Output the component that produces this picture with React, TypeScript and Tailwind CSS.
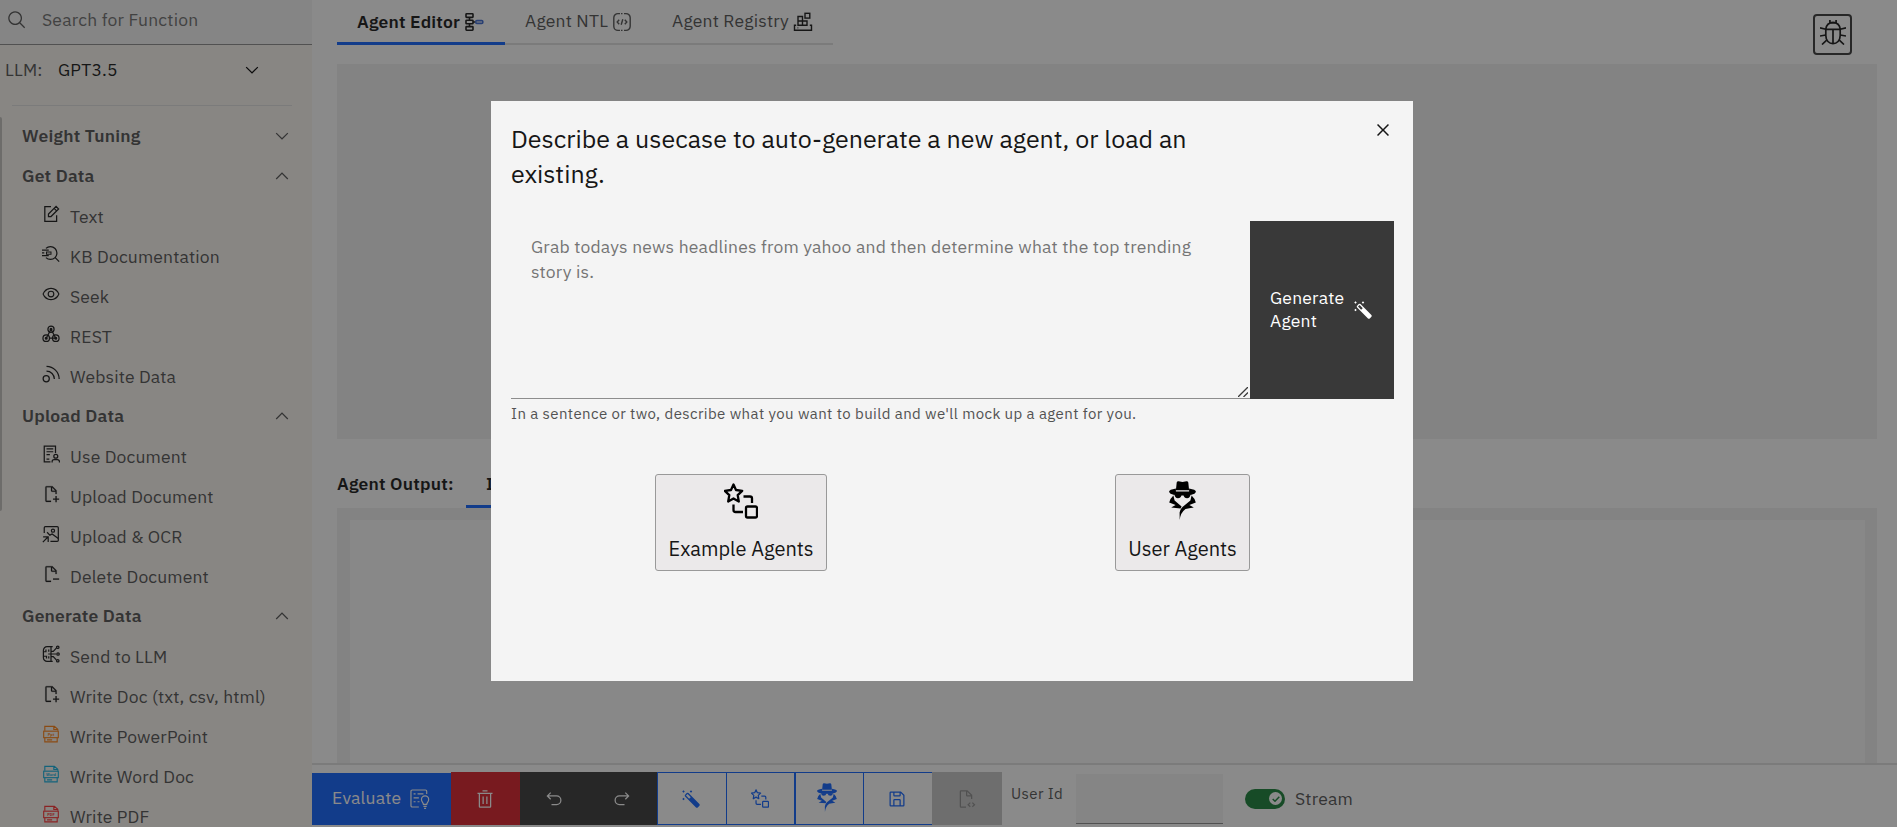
import React from "react";

type IconProps = { className?: string };

const Svg = ({ className = "size-5", children }: { className?: string; children: React.ReactNode }) => (
  <svg viewBox="0 0 32 32" className={`shrink-0 ${className}`} fill="currentColor">
    {children}
  </svg>
);

const Line = ({ className = "size-[18px]", children }: { className?: string; children: React.ReactNode }) => (
  <svg viewBox="0 0 32 32" className={`shrink-0 ${className}`} fill="none" stroke="currentColor" strokeWidth="2.200">
    {children}
  </svg>
);

const SearchIcon = ({ className }: IconProps) => (
  <Svg className={className}>
    <path d="M29 27.5859l-7.5521-7.5521a11.0177 11.0177 0 10-1.4141 1.4141L27.5859 29zM4 13a9 9 0 119 9A9.01 9.01 0 014 13z" />
  </Svg>
);

const ChevronDown = () => (
  <svg viewBox="0 0 16 16" className="size-5 shrink-0" fill="currentColor">
    <path d="M8 11 3 6 3.7 5.3 8 9.6 12.3 5.3 13 6z" />
  </svg>
);

const ChevronUp = () => (
  <svg viewBox="0 0 16 16" className="size-5 shrink-0" fill="currentColor">
    <path d="M8 5 13 10 12.3 10.7 8 6.4 3.7 10.7 3 10z" />
  </svg>
);

const CloseIcon = () => (
  <Svg className="size-6">
    <path d="M24 9.4 22.6 8 16 14.6 9.4 8 8 9.4 14.6 16 8 22.6 9.4 24 16 17.4 22.6 24 24 22.6 17.4 16 24 9.4z" />
  </Svg>
);

const EditIcon = () => (
  <Line>
    <path d="M16 3H5v26h21V18" />
    <path d="M11.500 20.500V16L25 2.500l4.500 4.500L16 20.500zM21.500 6 26 10.500" />
  </Line>
);

const KnowledgeIcon = () => (
  <Line>
    <path d="M7 6A11.500 11.500 0 1 1 7 22.500M23.500 22.500l7 7" />
    <path d="M0 9h12M0 14h4M0 19h12" />
    <path d="M8 12.500h8v4H8z" strokeWidth="1.800" />
  </Line>
);

const ViewIcon = () => (
  <Svg className="size-[18px]">
    <path d="M30.94 15.66A16.69 16.69 0 0016 5 16.69 16.69 0 001.06 15.66a1 1 0 000 .68A16.69 16.69 0 0016 27 16.69 16.69 0 0030.94 16.34 1 1 0 0030.94 15.66zM16 25c-5.3 0-10.900-3.930-12.930-9C5.100 10.930 10.700 7 16 7s10.900 3.930 12.930 9C26.900 21.070 21.300 25 16 25z" />
    <path d="M16 10a6 6 0 106 6A6 6 0 0016 10zm0 10a4 4 0 114-4A4 4 0 0116 20z" />
  </Svg>
);

const WebhookIcon = () => (
  <Line>
    <circle cx="16" cy="7.500" r="5.500" />
    <circle cx="7.500" cy="23.500" r="5.800" />
    <circle cx="24.500" cy="23.500" r="5.800" />
    <path d="M16 7.500 7.500 23.500M16 7.500 24.500 23.500M13 23.500h11" />
    <circle cx="16" cy="7.500" r="1.600" fill="currentColor" />
    <circle cx="7.500" cy="23.500" r="1.600" fill="currentColor" />
    <circle cx="24.500" cy="23.500" r="1.600" fill="currentColor" />
  </Line>
);

const RssIcon = () => (
  <Line>
    <circle cx="7.500" cy="24.500" r="5.500" />
    <path d="M8 11a14 14 0 0 1 14 14M8 2.500a22.500 22.500 0 0 1 22.500 22.500" />
  </Line>
);

const UseDocIcon = () => (
  <Line>
    <path d="M15 30H4V2h20v12" />
    <path d="M8 7h12M8 12h12M8 17h6M8 25h5" />
    <circle cx="24.500" cy="20" r="3.500" />
    <path d="M18 31v-1.500a3.500 3.500 0 0 1 3.500-3.500h6a3.500 3.500 0 0 1 3.500 3.500V31" />
  </Line>
);

const DOC = "M16 28H8V4h8v6a2.006 2.006 0 002 2h6v4h2V10a.909.909 0 00-.3-.7l-7-7A.909.909 0 0018 2H8A2.006 2.006 0 006 4V28a2.006 2.006 0 002 2h8zM18 4.400 23.600 10H18z";

const DocAddIcon = () => (
  <Svg className="size-[18px]">
    <path d={DOC} stroke="currentColor" strokeWidth=".4" />
    <path d="M30.500 23.800h-4.300v-4.300h-2.400v4.300h-4.300v2.400h4.300v4.300h2.400v-4.300h4.300z" />
  </Svg>
);

const DocSubtractIcon = () => (
  <Svg className="size-[18px]">
    <path d={DOC} stroke="currentColor" strokeWidth=".4" />
    <path d="M19.500 23.800h11v2.400h-11z" />
  </Svg>
);

const DocCodeIcon = () => (
  <Svg className="size-5">
    <path d={DOC} />
    <path d="M22.200 21 18 25l4.200 4 1.300-1.400L20.800 25l2.700-2.600zM26.800 21l-1.300 1.400 2.700 2.600-2.700 2.600 1.300 1.400L31 25z" />
  </Svg>
);

const ImageImportIcon = () => (
  <Line>
    <path d="M4 14V5a2 2 0 0 1 2-2h21a2 2 0 0 1 2 2v22a2 2 0 0 1-2 2H15" />
    <circle cx="19.500" cy="10" r="2.800" />
    <path d="M9 13l5 5 4-2 11 8M11 30v-9H2M11 21 1.500 30.500" />
  </Line>
);

const BrainIcon = () => (
  <Line>
    <path d="M16 3v26H9a6.500 6.500 0 0 1-6.500-6.500v-13A6.500 6.500 0 0 1 9 3zM16 3h3M16 29h3" />
    <path d="M3 12h4V8M3 20h5v4M12 8v4M11 16h5M12 20v4M16 16h9M16 11.500h4l5.500-6M16 20.500h4l5.500 6" />
    <circle cx="28" cy="4" r="2.200" />
    <circle cx="28.500" cy="16" r="2.200" />
    <circle cx="28" cy="28" r="2.200" />
  </Line>
);

const FileIcon = ({ label, className }: { label: string; className: string }) => (
  <svg viewBox="0 0 32 32" className={`size-[18px] shrink-0 ${className}`} fill="none" stroke="currentColor" strokeWidth="2">
    <path d="M5 10V2.500h17l6 5V10M21 2.500V8h6" />
    <rect x="3" y="11" width="26" height="11.500" />
    <path d="M5 22.500V30h22v-7.500M9 26.500h9" />
    <text x="16" y="19" textAnchor="middle" fontSize="7" letterSpacing="0" fontWeight="700" fill="currentColor" stroke="none">
      {label}
    </text>
  </svg>
);

const FlowIcon = () => (
  <svg viewBox="0 0 20 20" className="size-5 shrink-0" fill="none" stroke="currentColor" strokeWidth="1.600">
    <rect x="2" y="1.800" width="7" height="3.600" rx=".6" />
    <rect x="2" y="8.200" width="7" height="3.600" rx=".6" />
    <rect x="2" y="14.600" width="7" height="3.600" rx=".6" />
    <path d="M5.500 5.400v2.800M5.500 11.800v2.800M9 10h2.500" />
    <rect x="11.800" y="8.600" width="7" height="2.800" rx="1" stroke="#3a68d0" />
  </svg>
);

const CodeBoxIcon = () => (
  <svg viewBox="0 0 20 20" className="size-5 shrink-0" fill="none" stroke="currentColor" strokeWidth="1.400">
    <path d="M8 1.600H6A4.200 4.200 0 0 0 1.800 5.800v8.400A4.200 4.200 0 0 0 6 18.400h2M12 1.600h2a4.200 4.200 0 0 1 4.200 4.200v8.400a4.200 4.200 0 0 1-4.200 4.200h-2M9 18.400h1.500M9 1.600h1.500" />
    <path d="M7.200 7.800 5.200 10l2 2.200M12.800 7.800l2 2.200-2 2.200M10.800 7.200l-1.600 5.600" />
  </svg>
);

const RegistryIcon = () => (
  <svg viewBox="0 0 20 20" className="size-5 shrink-0 text-[#161616]" fill="none" stroke="currentColor" strokeWidth="1.400">
    <path d="M5 4.500h4.500v8.800H5zM5 9h9v4.300H5M9.500 9v4.300" />
    <rect x="12" y="1.300" width="4.800" height="4.800" />
    <path d="M3.200 13.300H1.500v5h17v-5h-1.700M4.500 15.900h.8" />
  </svg>
);

const BugIcon = () => (
  <svg viewBox="0 0 26 25" className="h-[25px] w-[26px]" fill="none" stroke="#161616" strokeWidth="1.700">
    <path d="M5.800 9.200C6.300 4.800 9.500 2.600 13 2.600s6.700 2.200 7.200 6.600v6.300c0 5-3.300 8.200-7.200 8.200s-7.200-3.200-7.200-8.200z" />
    <path d="M5.800 9.300h14.400M13 9.300v14.400M9.900 0v3.200M16.100 0v3.200M9.900 2.600h6.200" />
    <path d="M0 7.800l5.800 1.500M26 7.800l-5.800 1.500M0 16l5.800-1M26 16l-5.800-1M2 24.500l5.200-4.800M24 24.500l-5.200-4.800" />
  </svg>
);

const WandIcon = () => (
  <Svg className="size-5">
    <path d="M29.414 24 12 6.586a2.048 2.048 0 00-2.828 0L6.586 9.172a2 2 0 000 2.828l17.413 17.414a2.002 2.002 0 002.828 0l2.587-2.586a2 2 0 000-2.828zM8 10.586 10.586 8l5 5-2.587 2.587-5-5z" />
    <path d="M4 14l2 2-2 2-2-2zM16 2l2 2-2 2-2-2zM4 2l2 2-2 2-2-2z" />
  </Svg>
);

const StarBoxIcon = ({ className = "size-5" }: IconProps) => (
  <svg viewBox="0 0 34 36" className={`shrink-0 ${className}`} fill="none" stroke="currentColor" strokeWidth="2.300" strokeLinejoin="round">
    <path d="M9.500 1.500 12 7l6.200.8-4.500 4.300 1.100 6.400-5.300-3.100-5.300 3.100 1.100-6.400L.8 7.800 7 7z" />
    <path d="M19.500 13.500h6.500a2 2 0 0 1 2 2V20M9.500 21.500v5.500a2 2 0 0 0 2 2H19" />
    <rect x="22" y="23.500" width="11" height="11" rx="1.500" />
  </svg>
);

const SpyIcon = ({ className }: IconProps) => (
  <svg viewBox="0 0 27 39" className={`shrink-0 ${className}`} fill="currentColor">
    <path d="M6.900 9.200 7.700 1.600Q8 .2 9.600.3L13.500 1.100 17.400.3Q19 .2 19.300 1.600L20.100 9.200z" />
    <path d="M6.900 7.600Q-.2 8.800.1 10.900.8 12.800 4.500 13.700 8.500 14.500 13.500 14.500 18.500 14.500 22.500 13.700 26.200 12.800 26.900 10.900 27.200 8.800 20.100 7.600V10.500H6.900z" />
    <path d="M5.400 13.600H12.700Q12.200 17.200 8.900 17.200 6 17.200 5.400 13.600zM14.300 13.600H21.600Q21 17.200 18.100 17.200 14.800 17.200 14.300 13.600z" />
    <path d="M4.400 14.600 5.600 19.400 12.600 25.600 11.600 27.400Q7 27.200 2.200 26.600L6.600 24 .2 21.500Q1.200 17.500 4.400 14.600z" />
    <path d="M22.600 14.600 21.400 19.400 13.500 26Q11.200 28.200 10.600 31.500L10.700 39Q11.500 31.800 16.500 28.100 20 27.200 24.800 26.600L20.400 24 26.800 21.500Q25.800 17.500 22.600 14.600z" />
  </svg>
);

const EvaluateIcon = () => (
  <Line className="size-[21px]">
    <path d="M15 29H5a2 2 0 0 1-2-2V5a2 2 0 0 1 2-2h20a2 2 0 0 1 2 2v4M7 9h3M13 9h9M7 15h8M7 21h3M13 21h3" strokeWidth="1.800" />
    <path d="M22 25c0-3-3-3.500-3-7.500a5.500 5.500 0 0 1 11 0c0 4-3 4.500-3 7.500zM22 28h5M23 31h3" strokeWidth="1.800" />
  </Line>
);

const TrashIcon = () => (
  <Svg>
    <path d="M12 12H14V24H12zM18 12H20V24H18z" />
    <path d="M4 6V8H6V28a2 2 0 002 2H24a2 2 0 002-2V8h2V6zM8 28V8H24V28z" />
    <path d="M12 2H20V4H12z" />
  </Svg>
);

const UndoIcon = () => (
  <Svg>
    <path d="M20 10H7.815l3.587-3.586L10 5 4 11 10 17 11.402 15.585 7.818 12H20a6 6 0 010 12H12v2h8a8 8 0 000-16z" />
  </Svg>
);

const RedoIcon = () => (
  <Svg>
    <path d="M12 10H24.185L20.598 6.414 22 5 28 11 22 17 20.598 15.585 24.182 12H12a6 6 0 000 12h8v2H12a8 8 0 010-16z" />
  </Svg>
);

const SaveIcon = () => (
  <Svg>
    <path d="M27.710 9.290l-5-5A1 1 0 0022 4H6A2 2 0 004 6V26a2 2 0 002 2H26a2 2 0 002-2V10A1 1 0 0027.710 9.290zM12 6h8v4H12zm8 20H12V18h8zm2 0V18a2 2 0 00-2-2H12a2 2 0 00-2 2v8H6V6h4v4a2 2 0 002 2h8a2 2 0 002-2V6.410l4 4V26z" />
  </Svg>
);

const Group = ({ title, open = true, children }: { title: string; open?: boolean; children?: React.ReactNode }) => (
  <div>
    <div className="flex h-10 items-center justify-between pr-5 pl-[22px] font-semibold text-[#525252]">
      <span>{title}</span>
      {open ? <ChevronUp /> : <ChevronDown />}
    </div>
    {children}
  </div>
);

const Item = ({ icon, label }: { icon: React.ReactNode; label: string }) => (
  <div className="flex h-10 items-center gap-[10px] pl-[42px] tracking-[0.14px] whitespace-nowrap text-[#525252]">
    <span className="pb-1 text-[#161616]">{icon}</span>
    <span className="pt-[3px]">{label}</span>
  </div>
);

function Sidebar() {
  return (
    <aside className="flex h-full w-[312px] shrink-0 flex-col bg-[#faf6f1]">
      <div className="flex h-[45px] items-center gap-[15px] border-b border-[#8d8d8d] bg-[#f4f4f4] pb-[4px] pl-[7px] text-[#6f6f6f]">
        <SearchIcon className="size-5 text-[#525252]" />
        <span>Search for Function</span>
      </div>
      <div className="flex h-[50px] items-center pl-[5px]">
        <span className="w-[53px] text-[#525252]">LLM:</span>
        <span className="w-[184px] text-[#161616]">GPT3.5</span>
        <ChevronDown />
      </div>
      <div className="mt-[10px] mr-5 ml-3 h-px bg-[#e0e0e0]" />
      <div className="flex min-h-0 flex-1 overflow-hidden pt-[10px]">
        <div className="mt-px h-[394px] w-0.5 shrink-0 rounded-r bg-[#c4c2be]" />
        <nav className="-ml-0.5 w-[312px]">
          <Group title="Weight Tuning" open={false} />
          <Group title="Get Data">
            <Item icon={<EditIcon />} label="Text" />
            <Item icon={<KnowledgeIcon />} label="KB Documentation" />
            <Item icon={<ViewIcon />} label="Seek" />
            <Item icon={<WebhookIcon />} label="REST" />
            <Item icon={<RssIcon />} label="Website Data" />
          </Group>
          <Group title="Upload Data">
            <Item icon={<UseDocIcon />} label="Use Document" />
            <Item icon={<DocAddIcon />} label="Upload Document" />
            <Item icon={<ImageImportIcon />} label="Upload & OCR" />
            <Item icon={<DocSubtractIcon />} label="Delete Document" />
          </Group>
          <Group title="Generate Data">
            <Item icon={<BrainIcon />} label="Send to LLM" />
            <Item icon={<DocAddIcon />} label="Write Doc (txt, csv, html)" />
            <Item icon={<FileIcon label="Ppt" className="text-[#ff8010]" />} label="Write PowerPoint" />
            <Item icon={<FileIcon label="Word" className="text-[#10b0e0]" />} label="Write Word Doc" />
            <Item icon={<FileIcon label="PDF" className="text-[#ff3030]" />} label="Write PDF" />
          </Group>
        </nav>
      </div>
    </aside>
  );
}

function TopBar() {
  return (
    <header className="flex h-16 shrink-0 items-start justify-between pr-[45px] pl-[25px]">
      <div className="flex h-[45px] w-[496px] text-[#525252]">
        <div className="flex w-[168px] items-center gap-1 border-b-[3px] border-[#0f62fe] pt-0.5 pl-5 font-semibold text-[#161616]">
          <span>Agent Editor</span>
          <FlowIcon />
        </div>
        <div className="flex w-[148px] items-center gap-1 border-b-2 border-[#e0e0e0] pb-px pl-5">
          <span>Agent NTL</span>
          <span className="pt-0.5">
            <CodeBoxIcon />
          </span>
        </div>
        <div className="flex flex-1 items-center gap-1 border-b-2 border-[#e0e0e0] pb-px pl-[19px]">
          <span>Agent Registry</span>
          <span className="pt-0.5">
            <RegistryIcon />
          </span>
        </div>
      </div>
      <button className="mt-3.5 flex h-[41px] w-[39px] items-center justify-center rounded border-2 border-[#393939] pb-1">
        <BugIcon />
      </button>
    </header>
  );
}

const OUTLINE = "flex h-[53px] items-center justify-center border border-[#0f62fe] text-[#0f62fe]";

function ActionBar() {
  return (
    <footer className="flex h-16 shrink-0 border-t-2 border-[#e0e0e0] pt-[7px]">
      <div className="mt-px flex h-[52px] w-[139px] items-center gap-2 bg-[#0f62fe] pb-px pl-5 text-white">
        <span>Evaluate</span>
        <EvaluateIcon />
      </div>
      <div className="flex h-[53px] w-[69px] items-center justify-center bg-[#da1e28] pr-0.5 text-white">
        <TrashIcon />
      </div>
      <div className="flex h-[53px] w-[137px] items-center justify-around bg-[#393939] pr-px text-white">
        <UndoIcon />
        <RedoIcon />
      </div>
      <div className={`${OUTLINE} w-[70px] pr-0.5`}>
        <WandIcon />
      </div>
      <div className={`${OUTLINE} w-[68px] border-l-0 pr-0.5`}>
        <StarBoxIcon className="h-[19px] w-[18px]" />
      </div>
      <div className={`${OUTLINE} w-[69px] pr-1.5 pb-0.5`}>
        <SpyIcon className="h-[29px] w-[20px]" />
      </div>
      <div className={`${OUTLINE} w-[68px] border-x-0 pr-0.5`}>
        <SaveIcon />
      </div>
      <div className="flex h-[53px] w-[70px] items-center justify-center bg-[#c6c6c6] pr-0.5 text-[#8d8d8d]">
        <DocCodeIcon />
      </div>
      <span className="w-[74px] pt-[11px] pl-[9px] text-[15px] tracking-[0.4px] text-[#525252]">User Id</span>
      <div className="mt-0.5 h-[50px] w-[147px] border-b border-[#8d8d8d] bg-[#f4f4f4]" />
      <div className="flex h-[53px] items-center gap-2.5 pl-[22px] text-[#525252]">
        <span className="flex h-5 w-10 items-center justify-end rounded-full bg-[#198038] pr-[3px]">
          <span className="flex size-[13px] items-center justify-center rounded-full bg-white">
            <svg viewBox="0 0 8 6" className="h-[6px] w-2" fill="none" stroke="#198038" strokeWidth="1.500">
              <path d="M.7 3 3 5.200 7.300.8" />
            </svg>
          </span>
        </span>
        <span className="pt-px">Stream</span>
      </div>
    </footer>
  );
}

function Modal() {
  return (
    <div className="absolute inset-0 flex items-start justify-center bg-[#161616]/50 pt-[101px] pl-[7px]">
      <div className="flex h-[580px] w-[922px] flex-col bg-[#f4f4f4] pl-5">
        <div className="flex h-[120px] items-start justify-between pt-5 pr-[18px]">
          <h2 className="w-[700px] text-[25px] leading-[35px] tracking-normal text-[#161616]">
            Describe a usecase to auto-generate a new agent, or load an existing.
          </h2>
          <button className="-mt-[3px] text-[#161616]">
            <CloseIcon />
          </button>
        </div>
        <div className="flex h-[178px]">
          <div className="flex w-[739px] flex-col border-b border-[#8d8d8d] pt-[13px] pl-5">
            <p className="w-[680px] flex-1 leading-[25px] text-[#757575]">
              Grab todays news headlines from yahoo and then determine what the top trending story is.
            </p>
            <svg viewBox="0 0 10 10" className="mr-[2px] mb-px size-[10px] self-end" fill="none" stroke="#393939" strokeWidth="1.300">
              <path d="M0 10 10 0M5.500 10 10 5.500" />
            </svg>
          </div>
          <button className="flex w-36 items-center gap-[9px] bg-[#393939] pl-5 text-left leading-[22.5px] text-white">
            <span className="w-[74px] pb-px">Generate Agent</span>
            <WandIcon />
          </button>
        </div>
        <p className="mt-[5px] text-[15px] leading-5 tracking-[0.4px] text-[#525252]">
          In a sentence or two, describe what you want to build and we'll mock up a agent for you.
        </p>
        <div className="mt-[50px] flex gap-[288px] pl-[144px] text-xl tracking-normal text-[#161616]">
          <button className="flex h-[97px] w-[172px] flex-col items-center justify-between rounded-[3px] border border-[#999] bg-[#ebe9ea] pt-2 pb-[7px]">
            <StarBoxIcon className="h-[36px] w-[34px] text-black" />
            <span>Example Agents</span>
          </button>
          <button className="flex h-[97px] w-[135px] flex-col items-center justify-between rounded-[3px] border border-[#999] bg-[#ebe9ea] pt-1.5 pb-[7px]">
            <SpyIcon className="h-[39px] w-[27px] text-black" />
            <span>User Agents</span>
          </button>
        </div>
      </div>
    </div>
  );
}

export default function App() {
  return (
    <div className="relative flex h-[827px] w-[1897px] overflow-hidden bg-white font-['IBM_Plex_Sans','Noto_Sans',sans-serif] text-[17.5px] leading-[22.5px] tracking-[0.2px]">
      <Sidebar />
      <main className="flex min-w-0 flex-1 flex-col">
        <TopBar />
        <div className="mr-5 ml-[25px] h-[375px] shrink-0 bg-[#f0f0f0]" />
        <div className="ml-[25px] flex h-[69px] shrink-0 items-end font-semibold text-[#161616]">
          <span className="w-[129px] pb-[13px]">Agent Output:</span>
          <div className="flex h-[46px] w-[120px] items-center border-b-[3px] border-[#0f62fe] pt-0.5 pl-5">Input</div>
        </div>
        <div className="mr-5 ml-[25px] flex min-h-0 flex-1 bg-[#f0f0f0] pt-3 pr-3 pl-[13px]">
          <div className="flex-1 bg-[#fafafa]" />
        </div>
        <ActionBar />
      </main>
      <Modal />
    </div>
  );
}
